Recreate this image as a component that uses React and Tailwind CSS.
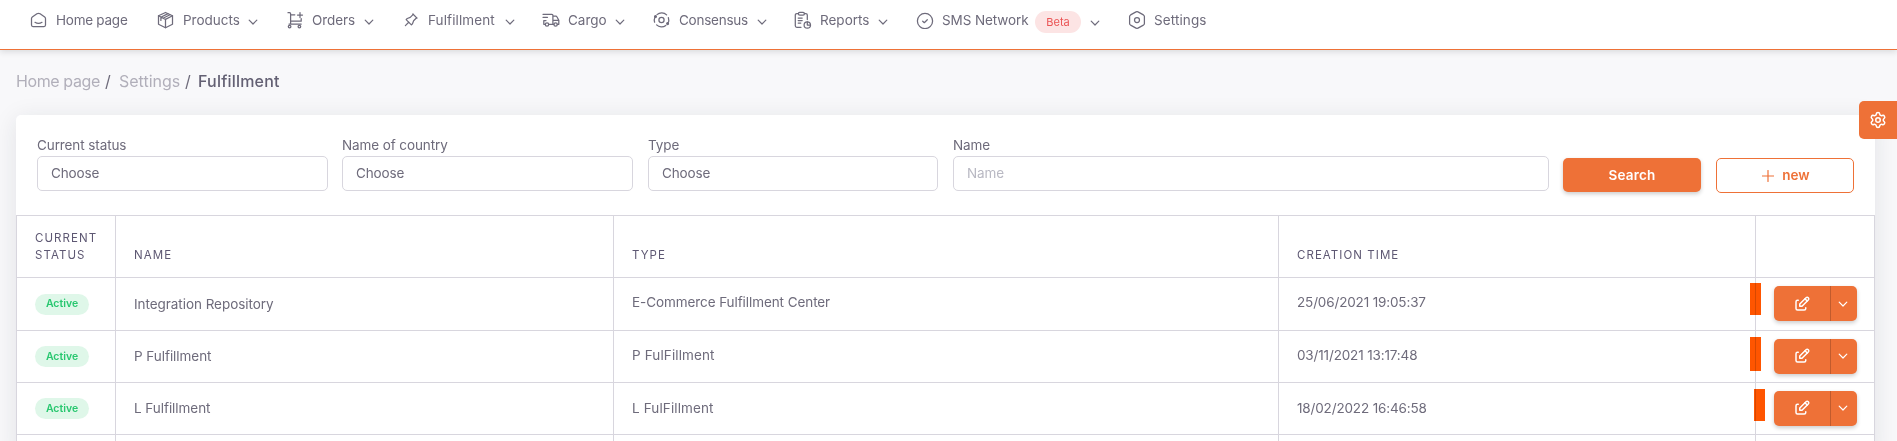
import React from "react";
import { TbPin, TbEdit } from "react-icons/tb";
import { Settings } from "lucide-react";

function Svg({ children, className = "" }) {
  return (
    <svg width="18" height="18" viewBox="0 0 18 18" fill="none" stroke="currentColor" strokeWidth="1.25" strokeLinecap="round" strokeLinejoin="round" className={"shrink-0 " + className}>
      {children}
    </svg>
  );
}

const icons = {
  home: (
    <Svg>
      <path d="M1.5 14V7.6c0-.6.3-1.1.8-1.5l4.6-3.3c.9-.6 2.3-.6 3.2 0l4.6 3.3c.5.4.8.9.8 1.5V14c0 .8-.6 1.500-1.500 1.500H3c-.8 0-1.500-.7-1.500-1.500z" />
      <path d="M5 11.300c2 1.300 5 1.300 7 0" />
    </Svg>
  ),
  box: (
    <Svg>
      <path d="M8.500 1.500l7 3.300v8.400l-7 3.500-7-3.500V4.800z" />
      <path d="M1.500 4.800l7 3.600 7-3.600M8.500 8.400v8.300M3.800 6.200l7.200-3.600M6 7.200l7-3.500M3.900 6.200v3.200" />
    </Svg>
  ),
  cart: (
    <Svg>
      <path d="M2 1.700h1.600c.6 0 1 .4 1 1v9.800M4.600 3.800h4.200M15.200 7.600v2.600H4.600M3 13.100h12.200M14 1.500v5M11.500 4h5" />
      <circle cx="3.600" cy="15.600" r="1.300" />
      <circle cx="13.400" cy="15.600" r="1.300" />
    </Svg>
  ),
  pin: <TbPin size={18} strokeWidth={1.6} className="shrink-0" />,
  truck: (
    <Svg>
      <path d="M1 3.300h8.900c.6 0 1 .4 1 1v9H7M1 6.300h4.500M3.200 13.300H1.800V9.600h2.200M10.900 5h2.900c.5 0 .9.200 1.100.7l1.900 3.600v4H15.300M11.900 13.300h-1M10.900 9.300h5.900" />
      <circle cx="5" cy="13.500" r="1.700" />
      <circle cx="13.600" cy="13.500" r="1.700" />
    </Svg>
  ),
  orbit: (
    <Svg>
      <path d="M4 3.600a7 7 0 0 1 9.600.3M15.400 6.700a7 7 0 0 1-.6 6M12.800 14.500a7 7 0 0 1-9.200-.6M1.600 11.200a7 7 0 0 1 .3-4.900" />
      <circle cx="8.500" cy="9" r="2.600" />
      <circle cx="2.500" cy="5.400" r=".9" fill="currentColor" />
      <circle cx="14.600" cy="12.600" r=".9" fill="currentColor" />
    </Svg>
  ),
  report: (
    <Svg>
      <path d="M7 16.300H2.800c-.8 0-1.500-.7-1.500-1.500V4c0-.8.7-1.500 1.500-1.500h1.400M10.400 2.500h1.400c.8 0 1.500.7 1.500 1.500v4.600M4.200 7h4M4.200 9.500h4M4.200 12h2.600" />
      <rect x="4.400" y="1.300" width="6" height="2.800" rx="1.300" />
      <circle cx="13.300" cy="14" r="3.200" />
      <path d="M13.300 10.800V14h3.200" />
    </Svg>
  ),
  check: (
    <Svg>
      <circle cx="9" cy="10" r="7.600" />
      <path d="M6.700 10.200l1.600 1.500 3-3" />
    </Svg>
  ),
  hex: (
    <Svg>
      <path d="M8 .9c.6-.4 1.400-.4 2 0l5.400 3c.6.400 1 1 1 1.700v6.800c0 .7-.4 1.300-1 1.700L10 17.100c-.6.400-1.400.400-2 0l-5.400-3c-.6-.4-1-1-1-1.700V5.600c0-.7.400-1.300 1-1.700z" />
      <circle cx="9" cy="9" r="2.500" />
    </Svg>
  ),
};

function Chevron({ className = "" }) {
  return (
    <svg width="10" height="8" viewBox="0 0 10 8" fill="none" stroke="currentColor" strokeWidth="1.2" strokeLinecap="round" strokeLinejoin="round" className={"shrink-0 " + className}>
      <path d="M1.200 2.200L5 6l3.800-3.800" />
    </svg>
  );
}

const nav = [
  { icon: "home", label: "Home page", w: "w-[127px]", t: "tracking-[-0.25px]" },
  { icon: "box", label: "Products", w: "w-[129px]", t: "w-[65px]", menu: true },
  { icon: "cart", label: "Orders", w: "w-[116px]", t: "w-[52px] tracking-[-0.1px]", menu: true },
  { icon: "pin", label: "Fulfillment", w: "w-[140px]", t: "w-[77px] tracking-[0.1px]", menu: true },
  { icon: "truck", label: "Cargo", w: "w-[111px]", t: "w-[47px]", menu: true },
  { icon: "orbit", label: "Consensus", w: "w-[141px]", t: "w-[78px] tracking-[-0.25px]", menu: true },
  { icon: "report", label: "Reports", w: "w-[122px]", t: "w-[58px]", menu: true },
  { icon: "check", label: "SMS Network", w: "w-[212px]", t: "w-[93px] tracking-[-0.1px]", badge: "Beta", menu: true },
  { icon: "hex", label: "Settings", w: "w-[100px]", t: "tracking-[0.1px]" },
];

const rows = [
  { name: "Integration Repository", type: "E-Commerce Fulfillment Center", time: "25/06/2021 19:05:37", timeClass: "tracking-[-0.15px] pb-[3px]", typeClass: "tracking-[-0.08px] pb-[3px]", h: "h-[53px]", mark: "left-[-6px] top-[5px] h-8" },
  { name: "P Fulfillment", type: "P FulFillment", time: "03/11/2021 13:17:48", timeClass: "tracking-[-0.15px] pb-[2px]", typeClass: "tracking-[0.12px] pb-[2px]", h: "h-[52px]", mark: "left-[-6px] top-[6px] h-[34px]" },
  { name: "L Fulfillment", type: "L FulFillment", time: "18/02/2022 16:46:58", timeClass: "tracking-[-0.15px]", typeClass: "tracking-[0.12px]", h: "h-[52px]", mark: "left-[-2px] top-[6px] h-8" },
];

const grid = "grid grid-cols-[99px_498px_665px_477px_119px]";
const cell = "flex items-center border-r border-[#d8d6de] pl-[18px]";

function Field({ label, value, className, placeholder }) {
  return (
    <div className={className}>
      <div className="h-[21px] text-[13.5px] leading-[20px] tracking-[-0.1px]">{label}</div>
      <div className={"flex h-[35px] items-center rounded-[5px] border border-[#d8d6de] pb-px pl-[13px] tracking-[-0.15px] " + (placeholder ? "text-[#b9b9c3]" : "")}>{value}</div>
    </div>
  );
}

export default function App() {
  return (
    <div className="relative h-[441px] w-[1897px] overflow-hidden bg-[#f8f8fa] font-['Inter','Liberation_Sans',sans-serif] text-[13.5px] text-[#6e6b7b]">
      <nav className="flex h-[50px] items-start border-b border-[#ee7137] bg-white pl-[30px] pt-[11px] shadow-[0_2px_6px_rgba(34,41,47,0.14)]">
        {nav.map((n) => (
          <div key={n.label} className={"flex h-[18px] shrink-0 items-center " + n.w}>
            {icons[n.icon]}
            <span className={"ml-2 mt-px shrink-0 whitespace-nowrap " + n.t}>{n.label}</span>
            {n.badge && (
              <span className="mr-[9px] mt-[4px] flex h-[22px] w-[46px] shrink-0 items-center justify-center rounded-full bg-[#fce4e4] text-[11px] text-[#ea5455]">{n.badge}</span>
            )}
            {n.menu && <Chevron className={n.badge ? "mt-[5px]" : "mt-[4px]"} />}
          </div>
        ))}
      </nav>

      <div className="flex h-[65px] items-center pb-[3px] pl-4 text-[16px]">
        <span className="w-[89px] tracking-[-0.4px] text-[#b1afba]">Home page</span>
        <span className="w-[14px]">/</span>
        <span className="w-[66px] text-[#b1afba]">Settings</span>
        <span className="w-[13px]">/</span>
        <span className="font-medium tracking-[0.2px] text-[#636073]">Fulfillment</span>
      </div>

      <main className="ml-4 h-[340px] w-[1859px] rounded-[5px] bg-white shadow-[0_4px_24px_rgba(34,41,47,0.1)]">
        <div className="flex h-[100px] pl-[21px] pt-5">
          <Field className="mr-[14px] w-[291px]" label="Current status" value="Choose" />
          <Field className="mr-[15px] w-[291px]" label="Name of country" value="Choose" />
          <Field className="mr-[15px] w-[290px]" label="Type" value="Choose" />
          <Field className="mr-[14px] w-[596px]" label="Name" value="Name" placeholder />
          <button className="mr-[15px] mt-[23px] flex h-[34px] w-[138px] items-center justify-center rounded-[5px] bg-[#ee7137] font-semibold tracking-[0.2px] text-white shadow-[0_2px_4px_rgba(0,0,0,0.2)]">Search</button>
          <button className="mt-[23px] flex h-[35px] w-[138px] items-center justify-center gap-2 rounded-[5px] border border-[#ee7137] pl-[2px] font-semibold text-[#ee7137]">
            <svg width="12" height="12" viewBox="0 0 12 12" stroke="currentColor" strokeWidth="1.2" strokeLinecap="round"><path d="M6 .5v11M.5 6h11" /></svg>
            new
          </button>
        </div>
        <div className="border-l border-t border-[#d8d6de]">
          <div className={grid + " h-[62px] border-b border-[#d8d6de] text-[11.5px] tracking-[1.05px] text-[#5e5873]"}>
            {["CURRENT STATUS", "NAME", "TYPE", "CREATION TIME", ""].map((h) => (
              <div key={h} className="flex items-end border-r border-[#d8d6de] pb-[13px] pl-[18px] leading-[17px]">{h}</div>
            ))}
          </div>
          {rows.map((r) => (
            <div key={r.name} className={grid + " border-b border-[#d8d6de] " + r.h}>
              <div className={cell}>
                <span className="flex h-[21px] w-[54px] items-center justify-center rounded-full bg-[#dff7e9] text-[10.5px] font-semibold text-[#28c76f]">Active</span>
              </div>
              <div className={cell + " tracking-[-0.05px]"}>{r.name}</div>
              <div className={cell + " " + r.typeClass}>{r.type}</div>
              <div className={cell + " " + r.timeClass}>{r.time}</div>
              <div className={cell + " relative"}>
                <span className={"absolute w-[11px] bg-[#ff5500] mix-blend-multiply " + r.mark} />
                <div className="mb-px flex h-[35px] w-[83px] overflow-hidden rounded-[5px] bg-[#ee7137] text-white shadow-[0_2px_4px_rgba(0,0,0,0.2)]">
                  <div className="flex w-[57px] items-center justify-center border-r border-[#c15b2d]"><TbEdit size={18} /></div>
                  <div className="flex flex-1 items-center justify-center pr-[2px]"><Chevron /></div>
                </div>
              </div>
            </div>
          ))}
          <div className={grid + " h-[10px]"}>
            {[0, 1, 2, 3, 4].map((i) => <div key={i} className="border-r border-[#d8d6de]" />)}
          </div>
        </div>
      </main>

      <div className="absolute right-0 top-[101px] flex h-[38px] w-[38px] items-center justify-center rounded-l-[5px] bg-[#ee7137] text-white">
        <Settings size={18} />
      </div>
    </div>
  );
}
